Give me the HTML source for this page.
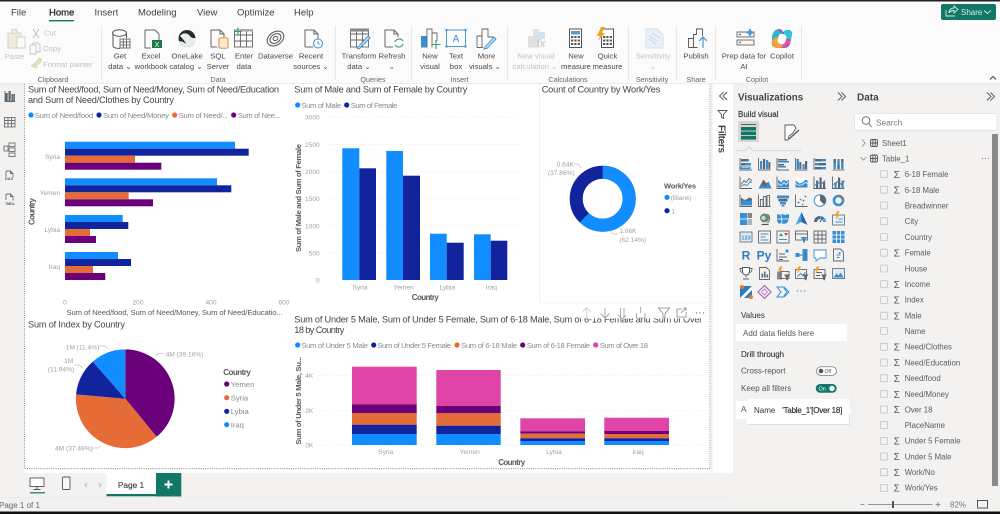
<!DOCTYPE html>
<html><head><meta charset="utf-8"><title>Power BI Desktop</title>
<style>
html,body{margin:0;padding:0;width:1000px;height:514px;overflow:hidden;background:#fff}
svg{display:block;filter:blur(.3px)}
text{font-family:"Liberation Sans",sans-serif;white-space:pre}
.m{font-size:9.5px;fill:#3f3f3f}
.r{font-size:7.7px;fill:#4a4a4a;text-anchor:middle}
.rd{font-size:7.7px;fill:#c4c4c4;text-anchor:middle}
.g{font-size:7.2px;fill:#666;text-anchor:middle}
.t{font-size:9.2px;fill:#454545}
.l{font-size:7.7px;fill:#8b8b8b}
.a{font-size:6.6px;fill:#a0a0a0}
.am{font-size:6.6px;fill:#a0a0a0;text-anchor:middle}
.ae{font-size:6.6px;fill:#a0a0a0;text-anchor:end}
.x{font-size:8px;fill:#5a5a5a;font-weight:bold}
.d{font-size:7.8px;fill:#5c5c5c}
.p{font-size:8px;fill:#555}
.s{fill:none;stroke:#5c6670;stroke-width:.9}
.sl{fill:none;stroke:#8a8a8a;stroke-width:.8}
.b{fill:#3a8ed2}
.n{fill:#5c6670}
.sb{fill:none;stroke:#3a8ed2;stroke-width:1}
.gr{stroke:#eeeeee;stroke-width:.7;stroke-dasharray:1.5 1.5}
.lead{fill:none;stroke:#c4c4c4;stroke-width:.7}
.cb{fill:none;stroke:#c4c4c4;stroke-width:.8}
.sig{font-size:10px;fill:#555;text-anchor:middle}
</style></head><body>
<svg width="1000" height="514" viewBox="0 0 1000 514" xmlns="http://www.w3.org/2000/svg">
<!-- frame regions -->
<rect width="1000" height="514" fill="#fff"/>
<rect y="0" width="1000" height="84" fill="#fbfbfb"/>
<rect y="0" width="1000" height="1.5" fill="#222"/>
<rect y="83" width="1000" height="1" fill="#ececec"/>
<rect x="0" y="84" width="24" height="430" fill="#f3f2f1"/>
<rect x="733" y="84" width="267" height="430" fill="#f3f2f1"/>
<rect x="0" y="473" width="733" height="41" fill="#f3f2f1"/>
<rect x="0" y="497" width="733" height="1" fill="#ebebeb"/>
<rect x="711.5" y="84" width=".8" height="389" fill="#dedede"/>
<path d="M24.5 84V468.7H710V84" fill="none" stroke="#777" stroke-width=".8" stroke-dasharray="1 1.2"/>

<!-- menu -->
<text class="m" x="11" y="15.5">File</text>
<text class="m" x="49" y="15.5" style="stroke:#222;stroke-width:.25;fill:#222">Home</text>
<rect x="49" y="20" width="25" height="1.4" fill="#117865"/>
<text class="m" x="94.500" y="15.5">Insert</text>
<text class="m" x="138" y="15.5">Modeling</text>
<text class="m" x="197" y="15.5">View</text>
<text class="m" x="237" y="15.5">Optimize</text>
<text class="m" x="294" y="15.5">Help</text>

<!-- share -->
<rect x="941" y="4" width="55" height="16" rx="2" fill="#117865"/>
<path d="M946 10v6h9M949 13c0-3 2-5 5-5V6l4 3.500-4 3.500v-2.500c-2 0-4 1-5 2.500" fill="none" stroke="#d6ece7" stroke-width=".9"/>
<text x="961" y="15" style="font-size:8px;fill:#d6ece7">Share</text>
<path d="M984 10.500l3.500 3 3.500-3" fill="none" stroke="#d6ece7" stroke-width=".9"/>
<path d="M990 79.500l3-3 3 3" fill="none" stroke="#444" stroke-width="1"/>

<!-- ribbon separators -->
<g stroke="#e4e4e4" stroke-width=".8">
<path d="M101.500 26V80M335.500 26V80M411.500 26V80M507.500 26V80M628.500 26V80M676.500 26V80M715.500 26V80M801.500 26V80"/>
</g>

<!-- ribbon icons -->
<g fill="none" stroke="#d8d3c6" stroke-width="1"><path d="M8 33h13v15H8z" fill="#f1ead9"/><rect x="12" y="29.500" width="5" height="4" fill="#eee"/><rect x="17" y="37" width="8" height="11" fill="#fbfbfb"/></g>
<path d="M33 29l6 9M39 29l-6 9" stroke="#bdbdbd" stroke-width=".9" fill="none"/>
<path d="M30 45h6v9h-6zM33 45v-2h5l2 2v7h-4" fill="none" stroke="#c2c2c2" stroke-width=".9"/>
<path d="M31 66l5-4 3-4 3 1-2 4-4 3 1 2z" fill="#ecdcb4" stroke="#c2c2c2" stroke-width=".5"/>

<!-- get data -->
<g fill="none" stroke="#555" stroke-width="1"><path d="M113 33v13c0 1.500 3 2.500 7 2.500"/><ellipse cx="119.500" cy="33" rx="7" ry="3.300"/><path d="M126.500 33v5"/></g>
<g fill="#fbfbfb" stroke="#555" stroke-width=".8"><rect x="120" y="39" width="10" height="9"/><path d="M120 42h10M120 45h10M123.300 39v9M126.600 39v9"/></g>
<!-- excel -->
<path d="M145 30h10l4 4v8M145 30v18h6" fill="#fff" stroke="#666" stroke-width="1"/><rect x="152" y="40" width="10" height="8" fill="#1a7a45"/><text x="157" y="47" style="font-size:7px;fill:#fff;text-anchor:middle">X</text>
<!-- onelake -->
<circle cx="187" cy="38.500" r="8.500" fill="#2a2a2a"/><path d="M180 36c3-4 8-3 10 0s6 2 6 2c-1 6-5 9-9 9s-7-3-8-6c2 0 5 1 7 3-1-3-4-6-6-8z" fill="#e9efef"/>
<!-- sql -->
<path d="M211 47V30h9l4 4v3M211 47h6M220 30v4h4" fill="none" stroke="#666" stroke-width="1"/><path d="M219 38.500c0-1 9-1 9 0v9c0 1-9 1-9 0z" fill="#fbe9d6" stroke="#e2862b" stroke-width="1"/>
<!-- enter data -->
<g fill="none" stroke="#666" stroke-width=".9"><rect x="234.500" y="30" width="18" height="17"/><path d="M234.500 35h18M234.500 41h18M240.500 30v17M246.500 30v17"/></g><rect x="240" y="29" width="13" height="2.500" fill="#aaa"/><path d="M238 27.500v8M234 31.500h8" stroke="#2f9e6e" stroke-width="1.100" fill="none"/>
<!-- dataverse -->
<g fill="none" stroke="#555" stroke-width="1"><ellipse cx="275.500" cy="38.500" rx="9" ry="6.500" transform="rotate(-35 275.500 38.500)"/><ellipse cx="275.500" cy="38.500" rx="6" ry="4.300" transform="rotate(-35 275.500 38.500)"/><ellipse cx="275.500" cy="38.500" rx="2.500" ry="2" transform="rotate(-35 275.500 38.500)"/></g>
<!-- recent -->
<path d="M305 47V30h9l4 4v6M305 47h8M314 30v4h4" fill="none" stroke="#666" stroke-width="1"/><circle cx="318" cy="43.500" r="4.500" fill="#fff" stroke="#3a8ed2" stroke-width="1"/><path d="M318 41v3h2.500" fill="none" stroke="#3a8ed2" stroke-width=".8"/>
<!-- transform -->
<g fill="none" stroke="#666" stroke-width=".9"><rect x="350.500" y="29" width="18" height="18"/><path d="M350.500 34h18M350.500 40h18M356.500 29v18M362.500 29v18"/></g><rect x="350" y="28.500" width="19" height="3" fill="#888"/><path d="M357 48l11-12 2 2-11 11z" fill="#bcdcf3" stroke="#3a8ed2" stroke-width=".9"/>
<!-- refresh -->
<path d="M385 47V30h9l4 4v3M385 47h8M394 30v4h4" fill="none" stroke="#666" stroke-width="1"/><path d="M395 42a4.500 4.500 0 0 1 8-1M403 44a4.500 4.500 0 0 1-8 1" fill="none" stroke="#2f9e6e" stroke-width="1.100"/>
<!-- new visual -->
<rect x="421" y="36" width="6" height="11.500" fill="#3a8ed2"/><path d="M427 47.500V29h5v18.500M432 33h5v8" fill="#fbfbfb" stroke="#666" stroke-width=".9"/><path d="M436 40v9M431.500 44.500h9" stroke="#2f9e6e" stroke-width="1.100"/>
<!-- text box -->
<rect x="446.500" y="30" width="19" height="16.500" fill="#fff" stroke="#3a8ed2" stroke-width=".9"/><g fill="#3a8ed2"><rect x="445.500" y="29" width="2" height="2"/><rect x="464.500" y="29" width="2" height="2"/><rect x="445.500" y="45.500" width="2" height="2"/><rect x="464.500" y="45.500" width="2" height="2"/></g><text x="456" y="42" style="font-size:10px;fill:#3a8ed2;text-anchor:middle">A</text>
<!-- more visuals -->
<path d="M477 47.500V36h5V29h6v8h5v3M477 47.500h6M482 36v11" fill="#fbfbfb" stroke="#666" stroke-width=".9"/><path d="M485 47l9-10 2 2-9 9.500-3 .5z" fill="#bcdcf3" stroke="#3a8ed2" stroke-width=".9"/>
<!-- visual calc -->
<path d="M528 36h5v11.500h-5zM533 29h6v18.500h-6z" fill="#e0e0e0"/><rect x="539" y="32" width="6" height="7" fill="#cfe4f3"/><text x="541" y="47" style="font-size:11px;font-style:italic;fill:#c2c2c2;text-anchor:middle">fx</text>
<!-- new measure -->
<rect x="569.500" y="29" width="12" height="18.500" fill="#fff" stroke="#555" stroke-width="1"/><rect x="571" y="31" width="9" height="3.500" fill="#5a9bd0"/><g fill="#555"><rect x="571" y="36" width="2.200" height="2"/><rect x="574.300" y="36" width="2.200" height="2"/><rect x="577.700" y="36" width="2.200" height="2"/><rect x="571" y="39.500" width="2.200" height="2"/><rect x="574.300" y="39.500" width="2.200" height="2"/><rect x="577.700" y="39.500" width="2.200" height="2"/><rect x="571" y="43" width="2.200" height="2"/><rect x="574.300" y="43" width="2.200" height="2"/><rect x="577.700" y="43" width="2.200" height="2"/></g>
<!-- quick measure -->
<rect x="601.500" y="29" width="12" height="18.500" fill="#fff" stroke="#555" stroke-width="1"/><g fill="#555"><rect x="603" y="36" width="2.200" height="2"/><rect x="606.300" y="36" width="2.200" height="2"/><rect x="609.700" y="36" width="2.200" height="2"/><rect x="603" y="39.500" width="2.200" height="2"/><rect x="606.300" y="39.500" width="2.200" height="2"/><rect x="609.700" y="39.500" width="2.200" height="2"/><rect x="603" y="43" width="2.200" height="2"/><rect x="606.300" y="43" width="2.200" height="2"/><rect x="609.700" y="43" width="2.200" height="2"/></g><path d="M601 27l-4 9h3l-2 5 7-8h-3l3-6z" fill="#f2a11f"/>
<!-- sensitivity -->
<path d="M646 29h11l6 6v13h-17z" fill="#e8f1f7" stroke="#cfe0ec" stroke-width=".9"/><path d="M649 36l8 5M649 39l7 5M652 33l8 5" stroke="#c4d6e2" stroke-width="1" fill="none"/>
<!-- publish -->
<path d="M688.500 47.500v-9h5v-4h3V29h6v7M688.500 47.500h9M693.500 38.500v9" fill="#fbfbfb" stroke="#555" stroke-width=".9"/><path d="M703 48V37M699 41l4-4 4 4" fill="none" stroke="#3a8ed2" stroke-width="1.100"/>
<!-- prep data -->
<rect x="737" y="32" width="17" height="5" fill="#f6f6f6" stroke="#666" stroke-width=".9"/><rect x="737" y="40" width="17" height="5" fill="#f6f6f6" stroke="#666" stroke-width=".9"/><circle cx="740" cy="34.500" r=".9" fill="#555"/><circle cx="740" cy="42.500" r=".9" fill="#555"/><path d="M750 28l1.500 3 3 1.500-3 1.500-1.500 3-1.500-3-3-1.500 3-1.500z" fill="#4a9ad6"/>
<!-- copilot -->
<path d="M776 30c3-2 6-1 7 2l2-1c3-2 7-1 7 3l-2 10c-1 3-3 4-6 4h-6c-4 0-7-2-6-6l1-7c0-2 1-4 3-5z" fill="#7d63d8"/><path d="M784 31c3-2 7-1 8 3l-1 6-7-3z" fill="#2ec4e0"/><path d="M772 42c1-4 3-5 5-5l7 9c-2 2-4 2-6 2-4 0-6-2-6-6z" fill="#f6a13a"/><path d="M772 36c1-4 3-6 6-6l5 4-4 4c-3-1-5 0-7 2z" fill="#2fb7c9"/><path d="M784 38l7 2c-1 4-3 7-6 7l-3-1z" fill="#e84f9c"/><rect x="778" y="34" width="8" height="10" rx="3" fill="#fff" transform="rotate(15 782 39)"/>

<!-- ribbon labels -->
<text class="rd" x="14.500" y="59">Paste</text>
<text x="44" y="35.500" style="font-size:7.7px;fill:#c4c4c4">Cut</text>
<text x="43" y="51" style="font-size:7.7px;fill:#c4c4c4">Copy</text>
<text x="43" y="67" style="font-size:7.7px;fill:#c4c4c4">Format painter</text>
<text class="g" x="53" y="82">Clipboard</text>
<text class="r" x="120" y="58.500">Get</text><text class="r" x="120" y="69">data ⌄</text>
<text class="r" x="151" y="58.500">Excel</text><text class="r" x="151" y="69">workbook</text>
<text class="r" x="187" y="58.500">OneLake</text><text class="r" x="186" y="69">catalog ⌄</text>
<text class="r" x="218" y="58.500">SQL</text><text class="r" x="218" y="69">Server</text>
<text class="r" x="244" y="58.500">Enter</text><text class="r" x="244" y="69">data</text>
<text class="r" x="275.500" y="58.500">Dataverse</text>
<text class="r" x="311" y="58.500">Recent</text><text class="r" x="311" y="69">sources ⌄</text>
<text class="g" x="218" y="82">Data</text>
<text class="r" x="359" y="58.500">Transform</text><text class="r" x="359" y="69">data ⌄</text>
<text class="r" x="392" y="58.500">Refresh</text><text class="r" x="392" y="69">⌄</text>
<text class="g" x="373" y="82">Queries</text>
<text class="r" x="430" y="58.500">New</text><text class="r" x="430" y="69">visual</text>
<text class="r" x="456" y="58.500">Text</text><text class="r" x="456" y="69">box</text>
<text class="r" x="486.500" y="58.500">More</text><text class="r" x="485" y="69">visuals ⌄</text>
<text class="g" x="459.500" y="82">Insert</text>
<text class="rd" x="536" y="58.500">New visual</text><text class="rd" x="535" y="69">calculation ⌄</text>
<text class="r" x="576" y="58.500">New</text><text class="r" x="576" y="69">measure</text>
<text class="r" x="607.500" y="58.500">Quick</text><text class="r" x="607.500" y="69">measure</text>
<text class="g" x="568" y="82">Calculations</text>
<text class="rd" x="653" y="58.500">Sensitivity</text><text class="rd" x="653" y="69">⌄</text>
<text class="g" x="652" y="82">Sensitivity</text>
<text class="r" x="696" y="58.500">Publish</text>
<text class="g" x="696" y="82">Share</text>
<text class="r" x="744" y="58.500">Prep data for</text><text class="r" x="744" y="69">AI</text>
<text class="r" x="782" y="58.500">Copilot</text>
<text class="g" x="757" y="82">Copilot</text>

<!-- left nav -->
<g fill="#5c6670"><rect x="5.500" y="93" width="2.200" height="8"/><rect x="8.500" y="91" width="2.200" height="10"/><rect x="11.500" y="94" width="2.200" height="7"/></g>
<path d="M5 91v10.500h9.500V94" fill="none" stroke="#5c6670" stroke-width=".9"/>
<g fill="none" stroke="#707070" stroke-width=".9"><rect x="4.500" y="117.500" width="10.500" height="9.500"/><path d="M4.500 120.500h10.500M4.500 123.700h10.500M8 117.500v9.500M11.500 117.500v9.500"/>
<rect x="9" y="143" width="6" height="3.500"/><rect x="9" y="148" width="6" height="3.500"/><rect x="9" y="153" width="6" height="3.500"/><rect x="4" y="146" width="4" height="5"/>
<path d="M6 171h4.500l2.500 2.500v4M6 177v-6M10.500 171v2.500H13"/><path d="M6 194h4.500l2.500 2.500v4M6 200v-6M10.500 194v2.500H13"/></g>
<text x="9" y="180" style="font-size:3.800px;fill:#555;text-anchor:middle;font-weight:bold">DAX</text>
<text x="10" y="205" style="font-size:3.500px;fill:#555;text-anchor:middle;font-weight:bold">TMDL</text>

<!-- Chart 1 -->
<text class="t" x="28" y="92.500" textLength="251" lengthAdjust="spacing">Sum of Need/food, Sum of Need/Money, Sum of Need/Education</text>
<text class="t" x="28" y="103" textLength="146" lengthAdjust="spacing">and Sum of Need/Clothes by Country</text>
<circle cx="31" cy="115" r="2.600" fill="#118dff"/><text class="l" x="34.700" y="118" textLength="58.500">Sum of Need/food</text>
<circle cx="99" cy="115" r="2.600" fill="#12239e"/><text class="l" x="103" y="118" textLength="66">Sum of Need/Money</text>
<circle cx="174.700" cy="115" r="2.600" fill="#e66c37"/><text class="l" x="178.700" y="118" textLength="49.500">Sum of Need/...</text>
<circle cx="233.700" cy="115" r="2.600" fill="#6b007b"/><text class="l" x="237.700" y="118" textLength="42.500">Sum of Nee...</text>
<g fill="#118dff"><rect x="65" y="141.700" width="170" height="7"/><rect x="65" y="178.300" width="152" height="7"/><rect x="65" y="215" width="57.700" height="7"/><rect x="65" y="252" width="53" height="7"/></g>
<g fill="#12239e"><rect x="65" y="148.700" width="183.700" height="7"/><rect x="65" y="185.300" width="166.300" height="7"/><rect x="65" y="222" width="63.300" height="7"/><rect x="65" y="259" width="66" height="7"/></g>
<g fill="#e66c37"><rect x="65" y="155.700" width="70" height="7"/><rect x="65" y="192.300" width="63.700" height="7"/><rect x="65" y="229" width="25" height="7"/><rect x="65" y="266" width="28" height="7"/></g>
<g fill="#6b007b"><rect x="65" y="162.700" width="96.300" height="7"/><rect x="65" y="199.300" width="88" height="7"/><rect x="65" y="236" width="31" height="7"/><rect x="65" y="273" width="40.300" height="7"/></g>
<text class="ae" x="60" y="159">Syria</text><text class="ae" x="60" y="195">Yemen</text><text class="ae" x="60" y="232">Lybia</text><text class="ae" x="60" y="269">Iraq</text>
<text class="x" transform="translate(34.500 211.500) rotate(-90)" text-anchor="middle" textLength="27">Country</text>
<text class="am" x="65" y="304.500">0</text><text class="am" x="138" y="304.500">200</text><text class="am" x="211" y="304.500">400</text><text class="am" x="284" y="304.500">600</text>
<text x="66.500" y="315" style="font-size:7.700px;fill:#5a5a5a" textLength="216">Sum of Need/food, Sum of Need/Money, Sum of Need/Educatio...</text>

<!-- Chart 2 -->
<text class="t" x="294.300" y="92.500" textLength="173">Sum of Male and Sum of Female by Country</text>
<circle cx="297.700" cy="105" r="2.600" fill="#118dff"/><text class="l" x="301.300" y="108" textLength="39.700">Sum of Male</text>
<circle cx="346.700" cy="105" r="2.600" fill="#12239e"/><text class="l" x="350.700" y="108" textLength="46.600">Sum of Female</text>
<path class="gr" d="M328 117H523M328 144.500H523M328 171.500H523M328 198.700H523M328 226H523M328 253H523"/>
<g fill="#118dff"><rect x="342.300" y="148.300" width="17" height="131.700"/><rect x="386.300" y="151" width="16.700" height="129"/><rect x="430" y="233.700" width="16.700" height="46.300"/><rect x="474" y="234.300" width="16.700" height="45.700"/></g>
<g fill="#12239e"><rect x="359.300" y="168.300" width="16.700" height="111.700"/><rect x="403" y="175.700" width="17" height="104.300"/><rect x="446.700" y="242.700" width="17" height="37.300"/><rect x="490.700" y="240.700" width="16.600" height="39.300"/></g>
<g class="ae"><text class="ae" x="319.700" y="119.500">3000</text><text class="ae" x="319.700" y="147">2500</text><text class="ae" x="319.700" y="174">2000</text><text class="ae" x="319.700" y="201">1500</text><text class="ae" x="319.700" y="228.500">1000</text><text class="ae" x="319.700" y="255.500">500</text><text class="ae" x="319.700" y="282.500">0</text></g>
<text class="x" transform="translate(301 198) rotate(-90)" text-anchor="middle" textLength="108" style="font-size:7.700px">Sum of Male and Sum of Female</text>
<text class="am" x="360" y="289.500">Syria</text><text class="am" x="403.700" y="289.500">Yemen</text><text class="am" x="447.300" y="289.500">Lybia</text><text class="am" x="491.300" y="289.500">Iraq</text>
<text class="x" x="425.300" y="300" text-anchor="middle" textLength="27">Country</text>

<!-- Chart 3 donut -->
<path d="M539.500 84V303H706" fill="none" stroke="#f1f1f1" stroke-width=".8"/>
<text class="t" x="541.700" y="92.500" textLength="118.600">Count of Country by Work/Yes</text>
<circle cx="602.700" cy="198.700" r="26.500" fill="none" stroke="#12239e" stroke-width="13"/>
<circle cx="602.700" cy="198.700" r="26.500" fill="none" stroke="#118dff" stroke-width="13" stroke-dasharray="103.470 166.500" transform="rotate(-90 602.700 198.700)"/>
<text class="am" x="565.300" y="166.500">0.64K</text><text class="am" x="561.300" y="175">(37.86%)</text>
<path class="lead" d="M574 164h4l3 4"/>
<text class="a" x="619.300" y="233">1.06K</text><text class="a" x="619.300" y="242">(62.14%)</text>
<path class="lead" d="M610 231l3 3h5"/>
<text class="x" x="664" y="188.500" textLength="32" style="font-size:7.500px">Work/Yes</text>
<circle cx="667" cy="197.300" r="2.600" fill="#118dff"/><text class="a" x="670.700" y="200">(Blank)</text>
<circle cx="667" cy="210.700" r="2.600" fill="#12239e"/><text class="a" x="671.500" y="213.500">1</text>

<!-- Chart 4 pie -->
<text class="t" x="28" y="327.500" textLength="97">Sum of Index by Country</text>
<g transform="translate(125.300 398.700)">
<path d="M0 0V-49.300A49.300 49.300 0 0 1 31.300 38.100Z" fill="#6b007b"/>
<path d="M0 0L31.300 38.100A49.300 49.300 0 0 1 -49.200 -4.300Z" fill="#e66c37"/>
<path d="M0 0L-49.200 -4.300A49.300 49.300 0 0 1 -32.500 -37.100Z" fill="#12239e"/>
<path d="M0 0L-32.500 -37.100A49.300 49.300 0 0 1 0 -49.300Z" fill="#118dff"/>
</g>
<text class="a" x="65.700" y="349.500">1M (11.4%)</text>
<path class="lead" d="M99 346h6l3 3"/>
<text class="am" x="68.700" y="363">1M</text><text class="am" x="61" y="371.500">(11.94%)</text>
<path class="lead" d="M74 365h5l4 3"/>
<text class="a" x="165.700" y="356.300">4M (39.16%)</text>
<path class="lead" d="M155 356l3-2.500h6"/>
<text class="a" x="55" y="450.500">4M (37.49%)</text>
<path class="lead" d="M92 448h6l3-2"/>
<text class="x" x="223.300" y="375" textLength="27.500">Country</text>
<circle cx="226.700" cy="384" r="2.600" fill="#6b007b"/><text x="230.700" y="387" class="l">Yemen</text>
<circle cx="226.700" cy="397.700" r="2.600" fill="#e66c37"/><text x="230.700" y="400.500" class="l">Syria</text>
<circle cx="226.700" cy="411.300" r="2.600" fill="#12239e"/><text x="230.700" y="414" class="l">Lybia</text>
<circle cx="226.700" cy="424.700" r="2.600" fill="#118dff"/><text x="230.700" y="427.500" class="l">Iraq</text>

<!-- Chart 5 -->
<text class="t" x="294.300" y="322.500" textLength="408">Sum of Under 5 Male, Sum of Under 5 Female, Sum of 6-18 Male, Sum of 6-18 Female and Sum of Over</text>
<text class="t" x="294.300" y="333" textLength="50">18 by Country</text>
<rect x="580" y="305" width="129" height="13.500" fill="#fff" opacity=".9"/>
<g class="sl" stroke-width=".8" fill="none" stroke="#a8a8a8">
<path d="M586.700 318V308M582.500 312l4.200-4.500 4.200 4.500" stroke="#cccccc"/>
<path d="M605 308v10M600.500 313.500l4.500 4.500 4.500-4.500" stroke="#999"/>
<path d="M620.500 308v10M624 308v10M618 315l4.200 4 4.200-4" stroke="#999"/>
<path d="M640.700 307v6M636.500 313v5h8.500v-5" stroke="#999"/>
<path d="M658.500 308h11l-4.500 5.500v4.500l-2-1v-3.500z" stroke="#888"/>
<path d="M677 309h5M677 309v8h9v-5M681 313l5-5M683 308h3v3" stroke="#888"/>
</g>
<g fill="#888"><circle cx="696.500" cy="313" r=".7"/><circle cx="700" cy="313" r=".7"/><circle cx="703.500" cy="313" r=".7"/></g>
<circle cx="297.700" cy="345" r="2.600" fill="#118dff"/><text class="l" x="301.300" y="348" textLength="66.700">Sum of Under 5 Male</text>
<circle cx="373.700" cy="345" r="2.600" fill="#12239e"/><text class="l" x="377.300" y="348" textLength="73.700">Sum of Under 5 Female</text>
<circle cx="457" cy="345" r="2.600" fill="#e66c37"/><text class="l" x="461" y="348" textLength="56">Sum of 6-18 Male</text>
<circle cx="522.700" cy="345" r="2.600" fill="#6b007b"/><text class="l" x="526.700" y="348" textLength="63.300">Sum of 6-18 Female</text>
<circle cx="595.700" cy="345" r="2.600" fill="#e044a7"/><text class="l" x="599.700" y="348" textLength="48.300">Sum of Over 18</text>
<path class="gr" d="M318 375.300H706M318 410.300H706M318 445H706"/>
<g fill="#e044a7"><rect x="352" y="366.700" width="64.700" height="37.600"/><rect x="436.300" y="370" width="64.400" height="36"/><rect x="520.300" y="418.300" width="64.700" height="13"/><rect x="604.300" y="417.700" width="64.700" height="13.300"/></g>
<g fill="#6b007b"><rect x="352" y="404.300" width="64.700" height="8.700"/><rect x="436.300" y="406" width="64.400" height="7.300"/><rect x="520.300" y="431.300" width="64.700" height="2.400"/><rect x="604.300" y="431" width="64.700" height="3"/></g>
<g fill="#e66c37"><rect x="352" y="413" width="64.700" height="11.700"/><rect x="436.300" y="413.300" width="64.400" height="12.400"/><rect x="520.300" y="433.700" width="64.700" height="4.600"/><rect x="604.300" y="434" width="64.700" height="4.300"/></g>
<g fill="#12239e"><rect x="352" y="424.700" width="64.700" height="9.300"/><rect x="436.300" y="425.700" width="64.400" height="8.300"/><rect x="520.300" y="438.300" width="64.700" height="2.700"/><rect x="604.300" y="438.300" width="64.700" height="2.700"/></g>
<g fill="#118dff"><rect x="352" y="434" width="64.700" height="11"/><rect x="436.300" y="434" width="64.400" height="11"/><rect x="520.300" y="441" width="64.700" height="4"/><rect x="604.300" y="441" width="64.700" height="4"/></g>
<text class="ae" x="313.300" y="377.800">4K</text><text class="ae" x="313.300" y="412.800">2K</text><text class="ae" x="313.300" y="447.500">0K</text>
<text class="x" transform="translate(301 400.700) rotate(-90)" text-anchor="middle" textLength="88" style="font-size:7.700px">Sum of Under 5 Male, Su...</text>
<text class="am" x="385.700" y="454">Syria</text><text class="am" x="469.700" y="454">Yemen</text><text class="am" x="554" y="454">Lybia</text><text class="am" x="638" y="454">Iraq</text>
<text class="x" x="511.700" y="465" text-anchor="middle" textLength="27">Country</text>

<!-- Filters -->
<path d="M727 92l-4 4 4 4M723.500 92l-4 4 4 4" fill="none" stroke="#555" stroke-width=".9"/>
<path d="M718 110.500h9l-3.500 4v4l-2-1v-3z" fill="none" stroke="#555" stroke-width=".9"/>
<text transform="translate(718.500 125) rotate(90)" style="font-size:10px;font-weight:bold;fill:#444" textLength="28">Filters</text>

<!-- Visualizations -->
<text x="738" y="100.500" style="font-size:9.800px;font-weight:bold;fill:#444">Visualizations</text>
<path d="M838 92.500l4 4-4 4M841.500 92.500l4 4-4 4M838 92.500" fill="none" stroke="#555" stroke-width=".9"/>
<text x="738" y="117" style="font-size:8px;fill:#333;stroke:#333;stroke-width:.15">Build visual</text>
<rect x="738" y="121" width="21" height="21" fill="#d6d6d6"/>
<rect x="741" y="127" width="15" height="3.600" fill="#117865"/><rect x="741" y="131.500" width="15" height="3.600" fill="#117865"/><rect x="741" y="136" width="15" height="3.600" fill="#117865"/>
<path d="M741 124.500h15" stroke="#444" stroke-width=".8"/>
<path d="M785 125h9l2 3-3 5-4 3-1 4h-3z" fill="#fff" stroke="#555" stroke-width=".9"/><path d="M789 139l10-9" stroke="#555" stroke-width="1.200" fill="none"/>
<path d="M736 150.700h9l4-4 4 4h48" fill="none" stroke="#cfcfcf" stroke-width=".8"/>

<!-- viz icon grid -->
<!-- row 1 -->
<g transform="translate(746 164)"><path class="s" d="M-6-6V6H6"/><rect class="n" x="-5" y="-5" width="6" height="2.500"/><rect class="b" x="1" y="-5" width="2" height="2.500"/><rect class="n" x="-5" y="-1" width="4" height="2.500"/><rect class="b" x="-1" y="-1" width="6" height="2.500"/><rect class="sb" x="-5" y="3" width="9" height="1.500"/></g>
<g transform="translate(764.500 164)"><path class="s" d="M-6-6V6H6"/><rect class="b" x="-4.500" y="-3" width="2.200" height="8"/><rect class="n" x="-1.500" y="-5" width="2.200" height="10"/><rect class="b" x="1.500" y="-4" width="2.200" height="9"/><rect class="n" x="4" y="-2" width="1.800" height="7"/></g>
<g transform="translate(783 164)"><path class="s" d="M-6-6V6H6"/><rect class="n" x="-5" y="-5" width="9" height="1.600"/><rect class="b" x="-5" y="-3" width="11" height="1.600"/><rect class="n" x="-5" y="0" width="6" height="1.600"/><rect class="b" x="-5" y="2" width="8" height="1.600"/></g>
<g transform="translate(801.500 164)"><path class="s" d="M-6-6V6H6"/><rect class="b" x="-5" y="-5" width="2.500" height="10"/><rect class="n" x="-2.200" y="-2" width="2" height="7"/><rect class="b" x="1" y="0" width="2.200" height="5"/><rect class="n" x="3.500" y="-3" width="2.200" height="8"/></g>
<g transform="translate(820 164)"><path class="s" d="M-6-6V6"/><rect class="n" x="-5" y="-5" width="6" height="2.400"/><rect class="b" x="1" y="-5" width="5" height="2.400"/><rect class="b" x="-5" y="-1" width="4" height="2.400"/><rect class="n" x="-1" y="-1" width="7" height="2.400"/><rect class="n" x="-5" y="3" width="6" height="2.400"/><rect class="b" x="1" y="3" width="5" height="2.400"/></g>
<g transform="translate(838.500 164)"><path class="s" d="M-6 6H6"/><rect class="b" x="-5" y="-1" width="2.400" height="6"/><rect class="n" x="-5" y="-5" width="2.400" height="4"/><rect class="n" x="-1.200" y="1" width="2.400" height="4"/><rect class="b" x="-1.200" y="-5" width="2.400" height="6"/><rect class="b" x="2.600" y="-2" width="2.400" height="7"/><rect class="n" x="2.600" y="-5" width="2.400" height="3"/></g>
<!-- row 2 -->
<g transform="translate(746 182.500)"><path class="s" d="M-6-6V6H6"/><path class="s" d="M-5 2l3-4 2 2 3-4 3 2"/><path class="sb" d="M-5 4l3-2 3 1 3-4 2 1"/></g>
<g transform="translate(764.500 182.500)"><path class="n" d="M-6 6l5-9 3 4 2-2 3 7z"/><path class="b" d="M-6 6l4-4 3 2 3-4 3 6z"/></g>
<g transform="translate(783 182.500)"><path class="s" d="M-6-6V6H6"/><path class="b" d="M-5 5V-3l3 3 3-3 2 2 3-2v8z"/><path d="M-5 1l3 2 3-3 2 2 3-3" fill="none" stroke="#fff" stroke-width=".8"/></g>
<g transform="translate(801.500 182.500)"><rect class="b" x="-6" y="-5" width="12" height="10"/><path d="M-6-2l4 3 3-1 3-3 2 1v-3H-6z" fill="#fff"/><path d="M-6 1l4 2 3-1 3-2 2 1" fill="none" stroke="#e6f1fa" stroke-width=".8"/></g>
<g transform="translate(820 182.500)"><path class="s" d="M-6-6V6H6"/><rect class="n" x="-4" y="-2" width="2.200" height="8"/><rect class="n" x="-.5" y="-5" width="2.200" height="11"/><rect class="n" x="3" y="-1" width="2.200" height="7"/><path class="sb" d="M-5 3l3-3 3 2 4-4"/></g>
<g transform="translate(838.500 182.500)"><path class="s" d="M-6-6V6H6"/><rect class="b" x="-4" y="0" width="2.200" height="6"/><rect class="n" x="-.5" y="-5" width="2.200" height="11"/><rect class="b" x="3" y="-2" width="2.200" height="8"/><path class="s" d="M-5 2l4-3 4 3 3-4"/></g>
<!-- row 3 -->
<g transform="translate(746 200.500)"><path class="s" d="M-6-6V6H6"/><path class="n" d="M-5 5V-3l4 3 4-3 3 1v7z"/><path class="b" d="M-5 5v-4l4-2 3 2 4-2v6z"/></g>
<g transform="translate(764.500 200.500)"><path class="s" d="M-6-6V6H6"/><rect class="s" x="-4" y="-1" width="2.600" height="7" fill="none"/><rect class="s" x="-1" y="-4" width="2.600" height="10" fill="none"/><rect class="s" x="2.500" y="-5" width="2.600" height="11" fill="none"/></g>
<g transform="translate(783 200.500)"><path class="b" d="M-6-5H6V-2H-6z"/><path class="n" d="M-4.500-1.500h9V1h-9z"/><path class="b" d="M-3 1.500h6v2.500h-6zM-1.500 4.500h3V6h-3z"/></g>
<g transform="translate(801.500 200.500)"><path class="s" d="M-6-6V6H6"/><circle class="n" cx="-3" cy="2" r=".9"/><circle class="b" cx="-1" cy="-1" r=".9"/><circle class="n" cx="2" cy="0" r=".9"/><circle class="b" cx="1" cy="4" r=".9"/><circle class="n" cx="4" cy="-4" r=".9"/></g>
<g transform="translate(820 200.500)"><circle r="5.800" fill="#fff" stroke="#3a8ed2" stroke-width="1"/><path class="n" d="M0 0V-5.800A5.800 5.800 0 0 1 4.100 4.100z"/></g>
<g transform="translate(838.500 200.500)"><circle r="4.500" fill="none" stroke="#3a8ed2" stroke-width="2.600"/><path d="M0-4.500A4.500 4.500 0 0 1 4.500 0" fill="none" stroke="#6f7a84" stroke-width="2.600"/></g>
<!-- row 4 -->
<g transform="translate(746 219)"><rect class="b" x="-6" y="-6" width="7" height="12"/><rect x="1.500" y="-6" width="4.500" height="5" fill="#7b8791"/><rect x="1.500" y="0" width="4.500" height="6" fill="#a9b3bb"/><path d="M-6 0h7" stroke="#fff" stroke-width=".8"/></g>
<g transform="translate(764.500 219)"><circle cx="0" cy="-1" r="4.500" fill="#6c8a6c"/><circle cx="-1" cy="-1" r="2.200" fill="#c5d8e8"/><path d="M-3 5.500H4" stroke="#555" stroke-width="1.200"/><path d="M3-5a6 6 0 0 1 0 9" class="s"/></g>
<g transform="translate(783 219)"><path class="b" d="M-6-5l3 1 2-1 3 1 4-1v5l-2 4-3 1-3-1-2 1-2-3z"/><path d="M-2-4l1 8M-6 0h12" stroke="#fff" stroke-width=".7"/></g>
<g transform="translate(801.500 219)"><path d="M0-7L6 6 0 3z" fill="#1c63a8"/><path d="M0-7L-6 6 0 3z" fill="#4ba0e0"/></g>
<g transform="translate(820 219)"><path d="M-6 3a6 6 0 0 1 12 0h-3a3 3 0 0 0-6 0z" fill="#4ba0e0"/><path d="M-6 3a6 6 0 0 1 6-6v3a3 3 0 0 0-3 3z" fill="#5c6670"/><path d="M0 3L3-2" stroke="#444" stroke-width=".9"/></g>
<g transform="translate(838.500 219)"><rect x="-6" y="-4" width="12" height="10" fill="#e8f1f8" stroke="#5c6670" stroke-width=".8"/><path d="M-1-8l-3 5h2l-1 4 4-5h-2l2-4z" fill="#f2a11f"/><path d="M-3 3h7M0 0h4" class="sb"/></g>
<!-- row 5 -->
<g transform="translate(746 237)"><rect x="-6" y="-5" width="12" height="10" fill="#dcebf6" stroke="#5c6670" stroke-width=".8"/><text y="2.300" style="font-size:5.500px;fill:#3a8ed2;text-anchor:middle;font-weight:bold">123</text></g>
<g transform="translate(764.500 237)"><rect class="s" x="-6" y="-6" width="12" height="12"/><path class="sb" d="M-4-3h8M-4 0h5M-4 3h8"/></g>
<g transform="translate(783 237)"><rect class="s" x="-6" y="-6" width="12" height="12"/><path d="M-4-1l2-3 2 3z" fill="#2a9d6f"/><path d="M1-4l2 3 2-3z" fill="#d04a3f"/><path class="sb" d="M-4 2.500h8"/></g>
<g transform="translate(801.500 237)"><rect class="s" x="-6" y="-6" width="12" height="9"/><path class="s" d="M-6-3H6"/><path d="M-1 0h7l-2.500 3v3l-2-1V3z" class="b"/></g>
<g transform="translate(820 237)"><rect class="s" x="-6" y="-6" width="12" height="12"/><path class="s" d="M-6-2H6M-6 2H6M-2-6V6M2-6V6"/></g>
<g transform="translate(838.500 237)"><rect class="b" x="-6" y="-6" width="12" height="12"/><path d="M-6-2H6M-6 2H6M-2-6V6M2-6V6" stroke="#fff" stroke-width=".8" fill="none"/></g>
<!-- row 6 -->
<text x="746" y="259.500" style="font-size:12px;font-weight:bold;fill:#2b7cc0;text-anchor:middle">R</text>
<text x="764" y="259.500" style="font-size:12px;font-weight:bold;fill:#2b7cc0;text-anchor:middle">Py</text>
<g transform="translate(783 255)"><path class="s" d="M-6-6V6H6"/><path class="s" d="M-4-1h6M-4 2h8M-4 4.500h4"/><circle class="b" cx="4" cy="-4" r="1.600"/></g>
<g transform="translate(801.500 255)"><rect class="b" x="-6" y="-2" width="4" height="4"/><rect class="b" x="1" y="-6" width="5" height="12"/><path class="s" d="M-2 0h3M4-3v6"/></g>
<g transform="translate(820 255)"><path d="M-6-5H6V3H0l-4 3V3h-2z" fill="#fff" stroke="#3a8ed2" stroke-width=".9"/></g>
<g transform="translate(838.500 255)"><path class="s" d="M-5-6H2l3 3V6H-5z"/><path class="sb" d="M-2 0h4M-2 2.500h3"/><circle class="b" cx="1" cy="-2" r="1"/></g>
<!-- row 7 -->
<g transform="translate(746 273.500)"><path d="M-3.500-6h7v4a3.500 3.500 0 0 1-7 0z" fill="#fff" stroke="#555" stroke-width="1"/><path class="s" d="M-3.500-5H-6c0 3 1 4 3 4M3.500-5H6c0 3-1 4-3 4M0 1.500V4M-3 5.500h6"/></g>
<g transform="translate(764.500 273.500)"><path class="s" d="M-5-6H2l3 3V6H-5z"/><rect class="n" x="-3" y="0" width="1.600" height="4"/><rect class="n" x="-.5" y="-2" width="1.600" height="6"/><rect class="n" x="2" y="1" width="1.600" height="3"/></g>
<g transform="translate(783 273.500)"><rect class="s" x="-3" y="-2" width="9" height="7"/><path class="n" d="M-6-2h5v8h-5z" opacity=".7"/><path d="M-3-7l-2 4h1.500l-1 3 3.500-4H-2l1.500-3z" fill="#f2a11f"/><path d="M1 1h6l-2 3v3l-2-1V4z" fill="#666"/></g>
<g transform="translate(801.500 273.500)"><rect class="s" x="-6" y="-4" width="11" height="9"/><path class="sb" d="M-4 3l3-3 2 2 3-3"/><path d="M-3-7l-2 4h1.500l-1 3 3.500-4H-2l1.500-3z" fill="#f2a11f"/><path d="M1 1h6l-2 3v3l-2-1V4z" fill="#666"/></g>
<g transform="translate(820 273.500)"><rect class="s" x="-6" y="-4" width="11" height="9"/><path class="s" d="M-4-1h6M-4 2h4"/><path d="M-3-7l-2 4h1.500l-1 3 3.500-4H-2l1.500-3z" fill="#f2a11f"/><path d="M1 1h6l-2 3v3l-2-1V4z" fill="#666"/></g>
<g transform="translate(838.500 273.500)"><rect x="-6" y="-5" width="12" height="10" fill="#dcebf6" stroke="#5c6670" stroke-width=".8"/><path class="b" d="M-5 4l3-4 2 2 2-3 3 5z"/></g>
<!-- row 8 -->
<g transform="translate(746 292)"><rect x="-6" y="-6" width="12" height="12" fill="#2b7cc0"/><path d="M-6 6L6-6v4L-2 6z" fill="#fff"/><circle cx="-4" cy="-5" r="2" fill="#e87a2c"/><circle cx="5" cy="5" r="2" fill="#e87a2c"/></g>
<g transform="translate(764.500 292)"><path d="M0-6.500L6.500 0 0 6.500-6.500 0z" fill="none" stroke="#a05bc6" stroke-width="1.100"/><path d="M0-3L3 0 0 3-3 0z" fill="none" stroke="#c77fd8" stroke-width="1"/></g>
<g transform="translate(783 292)"><path d="M-6-5H0L4 0 0 5H-6L-2 0z" fill="none" stroke="#3a8ed2" stroke-width="1"/><path d="M1-5L6 0 1 5" fill="none" stroke="#3a8ed2" stroke-width="1"/></g>
<g fill="#888"><circle cx="797.500" cy="291" r=".7"/><circle cx="801" cy="291" r=".7"/><circle cx="804.500" cy="291" r=".7"/></g>

<!-- Values etc -->
<text x="741" y="318" class="p" style="fill:#333">Values</text>
<rect x="736" y="324" width="110.700" height="17" fill="#fff"/>
<text x="743" y="336" class="p">Add data fields here</text>
<text x="741" y="357" style="font-size:8px;fill:#333;stroke:#333;stroke-width:.12">Drill through</text>
<text x="741" y="373.500" class="p">Cross-report</text>
<rect x="816.500" y="366.800" width="20" height="8.500" rx="4.250" fill="#fff" stroke="#666" stroke-width=".7"/><circle cx="821" cy="371" r="2.300" fill="#555"/><text x="824.500" y="373" style="font-size:5px;fill:#555">Off</text>
<text x="741" y="391" class="p">Keep all filters</text>
<rect x="815.700" y="384" width="21" height="8.800" rx="4.400" fill="#117865"/><circle cx="832" cy="388.400" r="2.700" fill="#fff"/><text x="818.500" y="390.300" style="font-size:5.500px;fill:#fff">On</text>
<rect x="736" y="401" width="30" height="18" fill="#fff"/>
<text x="741" y="412" class="p">Ap</text>
<path d="M747 399H849V408l2.500 3-2.500 3V424H747z" fill="#fff"/>
<path d="M747 424.500H849.500V414" fill="none" stroke="#e0e0e0" stroke-width="1"/>
<text x="754" y="413" class="p" style="fill:#333">Name</text>
<text x="782.300" y="413" style="font-size:8px;fill:#222;stroke:#222;stroke-width:.12" textLength="60">'Table_1'[Over 18]</text>

<!-- Data pane -->
<rect x="852" y="84" width="1" height="430" fill="#f0efee"/>
<text x="857" y="100.500" style="font-size:10px;font-weight:bold;fill:#444">Data</text>
<path d="M987 92.500l4 4-4 4M990.500 92.500l4 4-4 4" fill="none" stroke="#555" stroke-width=".9"/>
<rect x="854.500" y="113.500" width="142.500" height="16.500" rx="2" fill="#fff" stroke="#e2e2e2" stroke-width=".8"/>
<circle cx="866" cy="120.500" r="3.800" fill="none" stroke="#666" stroke-width=".9"/><path d="M868.700 123.500l3 3.500" stroke="#666" stroke-width=".9"/>
<text x="876" y="125.500" style="font-size:8.300px;fill:#777">Search</text>
<path d="M862 139.500l3 3.500-3 3.500" fill="none" stroke="#888" stroke-width=".8"/>
<path d="M860.500 157l3 3 3-3" fill="none" stroke="#888" stroke-width=".8"/>
<g fill="none" stroke="#555" stroke-width=".9"><rect x="870.500" y="139.500" width="7" height="7" rx="1.500"/><path d="M872.800 139.500v7M875.200 139.500v7M870.500 143h7"/><rect x="870.500" y="155" width="7" height="7" rx="1.500"/><path d="M872.800 155v7M875.200 155v7M870.500 158.500h7"/></g>
<text class="d" x="882" y="146">Sheet1</text>
<text class="d" x="882" y="161.500">Table_1</text>
<g fill="#888"><circle cx="982.500" cy="158.500" r=".6"/><circle cx="985.500" cy="158.500" r=".6"/><circle cx="988.500" cy="158.500" r=".6"/></g>
<g class="cb">
<rect class="cb" x="880.500" y="170.500" width="7" height="7" rx=".8"/><rect class="cb" x="880.500" y="186.200" width="7" height="7" rx=".8"/><rect class="cb" x="880.500" y="202" width="7" height="7" rx=".8"/><rect class="cb" x="880.500" y="217.700" width="7" height="7" rx=".8"/><rect class="cb" x="880.500" y="233.500" width="7" height="7" rx=".8"/><rect class="cb" x="880.500" y="249.200" width="7" height="7" rx=".8"/><rect class="cb" x="880.500" y="265" width="7" height="7" rx=".8"/><rect class="cb" x="880.500" y="280.700" width="7" height="7" rx=".8"/><rect class="cb" x="880.500" y="296.500" width="7" height="7" rx=".8"/><rect class="cb" x="880.500" y="312.200" width="7" height="7" rx=".8"/><rect class="cb" x="880.500" y="327.500" width="7" height="7" rx=".8"/><rect class="cb" x="880.500" y="343.300" width="7" height="7" rx=".8"/><rect class="cb" x="880.500" y="359" width="7" height="7" rx=".8"/><rect class="cb" x="880.500" y="374.700" width="7" height="7" rx=".8"/><rect class="cb" x="880.500" y="390.500" width="7" height="7" rx=".8"/><rect class="cb" x="880.500" y="406" width="7" height="7" rx=".8"/><rect class="cb" x="880.500" y="421.700" width="7" height="7" rx=".8"/><rect class="cb" x="880.500" y="437.400" width="7" height="7" rx=".8"/><rect class="cb" x="880.500" y="453" width="7" height="7" rx=".8"/><rect class="cb" x="880.500" y="468.700" width="7" height="7" rx=".8"/><rect class="cb" x="880.500" y="484.500" width="7" height="7" rx=".8"/>
</g>
<text class="sig" x="896.700" y="177.800">Σ</text><text class="d" x="904.700" y="177">6-18 Female</text>
<text class="sig" x="896.700" y="193.500">Σ</text><text class="d" x="904.700" y="192.800">6-18 Male</text>
<text class="d" x="904.700" y="208.500">Breadwinner</text>
<text class="d" x="904.700" y="224.200">City</text>
<text class="d" x="904.700" y="240">Country</text>
<text class="sig" x="896.700" y="256.500">Σ</text><text class="d" x="904.700" y="255.700">Female</text>
<text class="d" x="904.700" y="271.500">House</text>
<text class="sig" x="896.700" y="287.800">Σ</text><text class="d" x="904.700" y="287">Income</text>
<text class="sig" x="896.700" y="303.500">Σ</text><text class="d" x="904.700" y="302.700">Index</text>
<text class="sig" x="896.700" y="319.300">Σ</text><text class="d" x="904.700" y="318.500">Male</text>
<text class="d" x="904.700" y="333.800">Name</text>
<text class="sig" x="896.700" y="350.500">Σ</text><text class="d" x="904.700" y="349.700">Need/Clothes</text>
<text class="sig" x="896.700" y="366.200">Σ</text><text class="d" x="904.700" y="365.400">Need/Education</text>
<text class="sig" x="896.700" y="381.800">Σ</text><text class="d" x="904.700" y="381">Need/food</text>
<text class="sig" x="896.700" y="397.800">Σ</text><text class="d" x="904.700" y="397">Need/Money</text>
<text class="sig" x="896.700" y="413.200">Σ</text><text class="d" x="904.700" y="412.400">Over 18</text>
<text class="d" x="904.700" y="428">PlaceName</text>
<text class="sig" x="896.700" y="444.500">Σ</text><text class="d" x="904.700" y="443.700">Under 5 Female</text>
<text class="sig" x="896.700" y="460.200">Σ</text><text class="d" x="904.700" y="459.400">Under 5 Male</text>
<text class="sig" x="896.700" y="475.800">Σ</text><text class="d" x="904.700" y="475">Work/No</text>
<text class="sig" x="896.700" y="491.500">Σ</text><text class="d" x="904.700" y="490.700">Work/Yes</text>
<rect x="992" y="134" width="6" height="352" fill="#8a8a8a"/>
<rect x="853" y="493" width="147" height="19" fill="#f3f2f1"/>

<!-- zoom bar -->
<path d="M860.500 504.500h4M868 504.500h64.500M935.500 504.500h5M938 502v5" stroke="#777" stroke-width=".8" fill="none"/>
<rect x="892" y="501" width="2" height="7" fill="#555"/>
<text x="950" y="507.500" style="font-size:8px;fill:#777">82%</text>
<rect x="977.500" y="500.500" width="10" height="7.500" fill="none" stroke="#555" stroke-width="1"/>

<!-- tab bar -->
<rect x="30" y="478" width="14" height="8.500" fill="#fff" stroke="#555" stroke-width=".9"/><path d="M37 486.500v2.500M33.500 489.500h7" stroke="#555" stroke-width=".9" fill="none"/>
<rect x="30" y="492.200" width="15" height="1.200" fill="#117865"/>
<rect x="62.500" y="477" width="7.500" height="12.500" rx="1" fill="#f8f8f8" stroke="#555" stroke-width=".9"/>
<path d="M87 483l-2 2 2 2M99 483l2 2-2 2" fill="none" stroke="#bcbcbc" stroke-width=".9"/>
<rect x="106.500" y="473" width="49.500" height="23.500" fill="#fff"/>
<rect x="106.500" y="494" width="49.500" height="2.300" fill="#117865"/>
<rect x="156" y="473" width="25.300" height="23.500" fill="#117865"/>
<path d="M168.500 480.500v8M164.500 484.500h8" stroke="#fff" stroke-width="2"/>
<text x="131" y="488" style="font-size:8.300px;fill:#333;text-anchor:middle;stroke:#333;stroke-width:.1">Page 1</text>
<text x="-1" y="508" style="font-size:8px;fill:#666">Page 1 of 1</text>

<rect y="511.500" width="1000" height="2.500" fill="#111"/>
</svg>
</body></html>
